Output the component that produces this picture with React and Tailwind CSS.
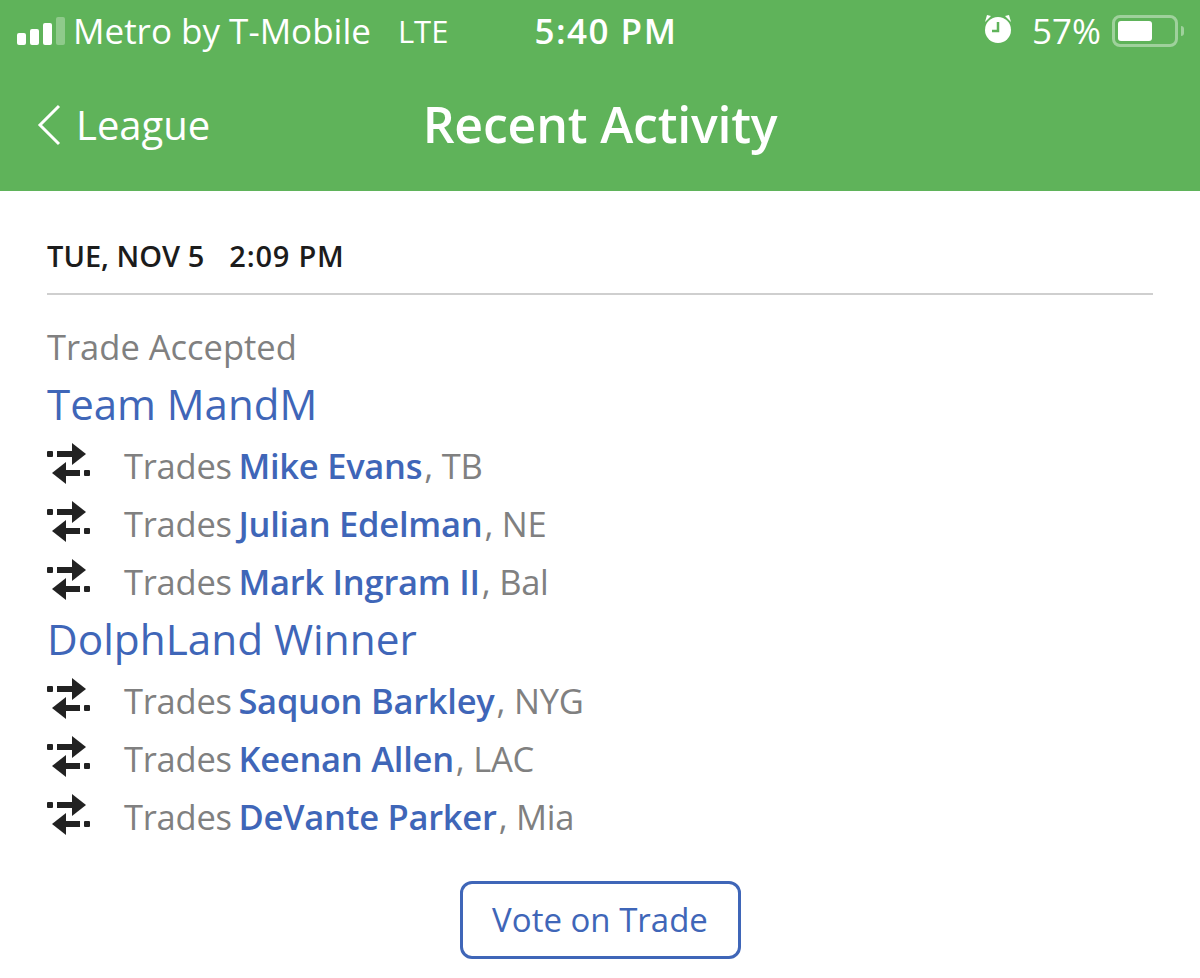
const font = "font-['Open_Sans',sans-serif]";

function TradeIcon() {
  return (
    <svg width="43" height="41" viewBox="0 0 43 41" className="mb-[6px] shrink-0 text-[#222]" fill="currentColor">
      <rect x="0" y="8" width="6" height="6" rx="1" />
      <rect x="10" y="8" width="16" height="6" />
      <path d="M25 0 L39 11 L25 22 Z" />
      <path d="M19 19 L5 30 L19 41 Z" />
      <rect x="18" y="27" width="15" height="6" />
      <rect x="37" y="27" width="6" height="6" rx="1" />
    </svg>
  );
}

function TradeRow({ player, team }) {
  return (
    <div className="flex h-[58px] items-center">
      <div className="w-[77px]">
        <TradeIcon />
      </div>
      <p className="text-[34.5px] tracking-[-0.25px] text-[#808080]">
        Trades <span className="-ml-[2px] mr-[2px] font-semibold text-[#3f66b8]">{player}</span>, {team}
      </p>
    </div>
  );
}

export default function App() {
  return (
    <div className={`${font} h-[978px] w-[1200px] overflow-hidden bg-white`}>
      {/* Green header */}
      <header className="h-[191px] bg-[#5fb35a] text-white">
        <div className="relative flex h-[62px] items-center pl-[17px] pr-[16px] text-[35px]">
          <div className="flex items-end gap-[4px]">
            <span className="h-[12px] w-[9px] rounded-[2px] bg-white" />
            <span className="h-[16px] w-[9px] rounded-[2px] bg-white" />
            <span className="h-[22px] w-[9px] rounded-[2px] bg-white" />
            <span className="h-[28px] w-[9px] rounded-[2px] bg-white/30" />
          </div>
          <span className="ml-[8px]">Metro by T-Mobile</span>
          <span className="ml-[27px] text-[31px]">LTE</span>
          <span className="ml-[86px] font-semibold tracking-[1.5px]">5:40 PM</span>
          <div className="ml-auto flex items-center">
            <svg width="30" height="30" viewBox="0 0 30 30" fill="white" className="mb-[4px]">
              <circle cx="15" cy="16" r="13" />
              <path d="M2 8 L8 2 L4 1 Z M28 8 L22 2 L26 1 Z" />
              <path d="M15 8 V17 H9" stroke="#5fb35a" strokeWidth="2.5" fill="none" />
            </svg>
            <span className="ml-[19px]">57%</span>
            <div className="ml-[11px] flex items-center">
              <div className="h-[32px] w-[66px] rounded-[8px] border-[3px] border-white/40 p-[3px]">
                <div className="h-full w-[34px] rounded-[3px] bg-white" />
              </div>
              <span className="ml-[3px] h-[10px] w-[3px] rounded-r-full bg-white/40" />
            </div>
          </div>
        </div>
        <div className="relative flex h-[124px] items-center justify-center">
          <div className="absolute left-[37px] top-[42px] flex items-center gap-[15px]">
            <svg width="24" height="42" viewBox="0 0 24 42" fill="none" stroke="white" strokeWidth="3">
              <path d="M22 2 L3 21 L22 40" />
            </svg>
            <span className="text-[40px] leading-none">League</span>
          </div>
          <h1 className="text-[50px] font-semibold tracking-[-0.2px]">Recent Activity</h1>
        </div>
      </header>

      <main className="px-[47px]">
        <div className="flex h-[104px] items-end border-b-2 border-[#cfcfcf] pb-[16px] text-[29px] font-semibold text-[#1c1c1c]">
          <span>TUE, NOV 5</span>
          <span className="ml-[25px] tracking-[0.8px]">2:09 PM</span>
        </div>
        <p className="mt-[31px] text-[34.5px] leading-[42px] text-[#808080]">Trade Accepted</p>
        <h2 className="h-[69px] text-[42px] leading-[72px] text-[#3f66b8]">Team MandM</h2>
        <TradeRow player="Mike Evans" team="TB" />
        <TradeRow player="Julian Edelman" team="NE" />
        <TradeRow player="Mark Ingram II" team="Bal" />
        <h2 className="mb-[5px] h-[56px] text-[42.300px] leading-[56px] text-[#3f66b8]">DolphLand Winner</h2>
        <TradeRow player="Saquon Barkley" team="NYG" />
        <TradeRow player="Keenan Allen" team="LAC" />
        <TradeRow player="DeVante Parker" team="Mia" />
        <div className="mt-[35px] flex justify-center">
          <button className="h-[78px] w-[281px] rounded-[12px] border-[3px] border-[#3f66b8] text-[33px] text-[#3f66b8]">
            Vote on Trade
          </button>
        </div>
      </main>
    </div>
  );
}
